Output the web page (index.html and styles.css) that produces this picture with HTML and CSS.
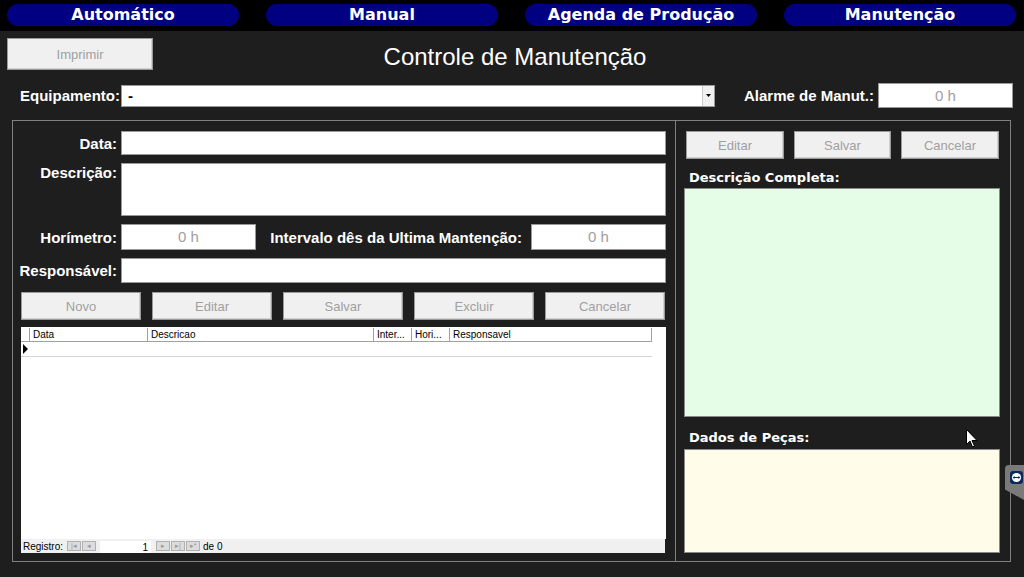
FILE: index.html
```html
<!DOCTYPE html>
<html lang="pt-BR">
<head>
    <meta charset="UTF-8">
    <meta name="viewport" content="width=device-width, initial-scale=1.0">
    <title>Controle de Manutenção</title>
    <link rel="stylesheet" href="styles.css">
</head>
<body>
    <nav class="topbar">
        <a class="tab">Automático</a>
        <a class="tab">Manual</a>
        <a class="tab">Agenda de Produção</a>
        <a class="tab">Manutenção</a>
    </nav>

    <header class="header">
        <button class="btn btn-print" disabled>Imprimir</button>
        <h1 class="title">Controle de Manutenção</h1>
    </header>

    <div class="equip-row">
        <label class="lbl">Equipamento:</label>
        <div class="select">
            <span class="select-value">-</span>
            <span class="select-arrow">
                <svg width="5" height="3" viewBox="0 0 5 3"><path d="M0 0h5L2.5 3z" fill="#000"/></svg>
            </span>
        </div>
        <label class="lbl alarm-lbl">Alarme de Manut.:</label>
        <div class="field field-hours alarm-field">0 h</div>
    </div>

    <main class="panel">
        <section class="left">
            <div class="form">
                <label class="lbl">Data:</label>
                <div class="field field-data"></div>

                <label class="lbl lbl-top">Descrição:</label>
                <div class="field field-desc"></div>

                <label class="lbl">Horímetro:</label>
                <div class="hours-row">
                    <div class="field field-hours">0 h</div>
                    <label class="lbl lbl-interval">Intervalo dês da Ultima Mantenção:</label>
                    <div class="field field-hours">0 h</div>
                </div>

                <label class="lbl">Responsável:</label>
                <div class="field field-resp"></div>
            </div>

            <div class="actions">
                <button class="btn" disabled>Novo</button>
                <button class="btn" disabled>Editar</button>
                <button class="btn" disabled>Salvar</button>
                <button class="btn" disabled>Excluir</button>
                <button class="btn" disabled>Cancelar</button>
            </div>

            <div class="grid">
                <div class="grid-head">
                    <div class="cell cell-sel"></div>
                    <div class="cell col-data">Data</div>
                    <div class="cell col-desc">Descricao</div>
                    <div class="cell col-short">Inter...</div>
                    <div class="cell col-short">Hori...</div>
                    <div class="cell col-resp">Responsavel</div>
                </div>
                <div class="grid-row">
                    <span class="row-marker"></span>
                </div>
            </div>

            <div class="recnav">
                <span class="recnav-label">Registro:</span>
                <span class="navbtn">|◂</span><span class="navbtn">◂</span>
                <span class="recnav-input">1</span>
                <span class="navbtn">▸</span><span class="navbtn">▸|</span><span class="navbtn">▸*</span>
                <span class="recnav-total">de 0</span>
            </div>
        </section>

        <section class="right">
            <div class="actions actions-right">
                <button class="btn btn-w98" disabled>Editar</button>
                <button class="btn btn-w97" disabled>Salvar</button>
                <button class="btn btn-w98" disabled>Cancelar</button>
            </div>
            <div class="memo-lbl">Descrição Completa:</div>
            <div class="memo memo-green"></div>
            <div class="memo-lbl memo-lbl-parts">Dados de Peças:</div>
            <div class="memo memo-yellow"></div>
        </section>
    </main>

    <!-- mouse pointer left in the capture -->
    <svg class="cursor" width="12" height="19" viewBox="0 0 12 19">
        <path d="M0.5 0.5v15l3.5-3.5 2.5 6 2-1-2.5-5.5h5z" fill="#fff" stroke="#000" stroke-width="1"/>
    </svg>

    <div class="side-tab">
        <svg width="13" height="13" viewBox="0 0 13 13">
            <rect x="0" y="0" width="13" height="13" rx="3" fill="#0b2a5b"/>
            <circle cx="6.5" cy="6.5" r="4.6" fill="#fff"/>
            <path d="M2.6 6.5l2-1.6v1h3.8v-1l2 1.6-2 1.6v-1H4.6v1z" fill="#0b2a5b"/>
        </svg>
    </div>
</body>
</html>
```

FILE: styles.css
```css
body {
    margin: 0;
    background-color: #1e1e1e;
    font-family: "Liberation Sans", Arial, sans-serif;
    color: #fff;
    width: 1024px;
    height: 577px;
    overflow: hidden;
}

.topbar {
    background-color: #000;
    display: grid;
    grid-template-columns: repeat(4, 232px);
    column-gap: 27px;
    padding: 4px 7px 5px;
}

.tab {
    height: 22px;
    line-height: 22px;
    border-radius: 11px;
    background-color: #000080;
    color: #fff;
    text-align: center;
    font-family: "DejaVu Sans", Verdana, sans-serif;
    font-weight: bold;
    font-size: 16px;
}

.header {
    display: grid;
    grid-template-columns: 146px 1fr 146px;
    padding: 0 7px;
    margin-top: 7px;
    height: 32px;
}

.title {
    margin: 0;
    padding: 3px 0 0 6px;
    text-align: center;
    font-size: 24px;
    font-weight: normal;
    line-height: 32px;
}

.btn {
    background-color: #f0f0f0;
    border: 1px solid #9a9a9a;
    box-shadow: inset -1px -1px 0 #d0d0d0;
    color: #a0a0a0;
    font-family: "Liberation Sans", Arial, sans-serif;
    font-size: 13px;
    padding: 0;
    height: 28px;
}

.btn-print {
    height: 32px;
}

.lbl {
    font-weight: bold;
    font-size: 15px;
    color: #fff;
    text-align: right;
    white-space: nowrap;
}

.equip-row {
    display: flex;
    align-items: center;
    margin-top: 13px;
    height: 25px;
    padding-left: 20px;
}

.equip-row .lbl {
    width: 98px;
    margin-right: 3px;
}

.select {
    width: 594px;
    height: 22px;
    box-sizing: border-box;
    background-color: #fff;
    border: 1px solid #999;
    display: flex;
    color: #000;
}

.select-value {
    flex: 1;
    padding-left: 6px;
    font-weight: bold;
    font-size: 15px;
    line-height: 20px;
}

.select-arrow {
    width: 11px;
    background-color: #f0f0f0;
    border-left: 1px solid #c8c8c8;
    display: flex;
    align-items: center;
    justify-content: center;
}

.equip-row .alarm-lbl {
    width: auto;
    margin: 0 4px 0 29px;
}

.field {
    background-color: #fff;
    border: 1px solid #999;
    box-sizing: border-box;
}

.field-hours {
    width: 135px;
    height: 25px;
    text-align: center;
    color: #a0a0a0;
    font-size: 15px;
    line-height: 23px;
}

.panel {
    margin: 12px 13px 0 12px;
    height: 442px;
    box-sizing: border-box;
    border: 1px solid #808080;
    display: grid;
    grid-template-columns: 663px 1fr;
}

.left {
    border-right: 1px solid #808080;
    display: flex;
    flex-direction: column;
    padding: 10px 9px 8px 0;
}

.form {
    display: grid;
    grid-template-columns: 104px 1fr;
    column-gap: 4px;
    row-gap: 8px;
    align-items: center;
}

.lbl-top {
    align-self: start;
    padding-top: 1px;
}

.field-data {
    height: 24px;
}

.field-desc {
    height: 53px;
}

.field-resp {
    height: 25px;
}

.hours-row {
    display: flex;
    align-items: center;
    gap: 9px;
}

.hours-row .field-hours {
    height: 26px;
    line-height: 24px;
}

.lbl-interval {
    flex: 1;
}

.actions {
    display: flex;
    gap: 11px;
    margin: 9px 0 0 8px;
}

.actions .btn {
    width: 120px;
}

.grid {
    flex: 1;
    margin: 7px 0 0 8px;
    background-color: #fff;
    color: #000;
    font-size: 10px;
}

.grid-head {
    display: flex;
    margin-top: 1px;
    height: 14px;
    width: 631px;
    box-sizing: border-box;
    border-bottom: 1px solid #a0a0a0;
}

.cell {
    border-right: 1px solid #a0a0a0;
    box-sizing: border-box;
    padding-left: 3px;
    line-height: 13px;
    white-space: nowrap;
    overflow: hidden;
}

.cell-sel {
    width: 8px;
    padding: 0;
    border-right: none;
}

.col-data {
    width: 119px;
    border-left: 1px solid #a0a0a0;
}

.col-desc {
    width: 226px;
}

.col-short {
    width: 38px;
}

.col-resp {
    width: 202px;
}

.grid-row {
    height: 15px;
    width: 631px;
    box-sizing: border-box;
    border-bottom: 1px solid #d4d4d4;
    display: flex;
    align-items: center;
}

.row-marker {
    margin-left: 2px;
    width: 0;
    height: 0;
    border-top: 5px solid transparent;
    border-bottom: 5px solid transparent;
    border-left: 5px solid #000;
}

.recnav {
    height: 14px;
    margin-left: 8px;
    margin-right: 1px;
    background-color: #f0f0f0;
    color: #000;
    font-size: 10px;
    display: flex;
    align-items: center;
    padding-left: 2px;
}

.recnav-label {
    margin-right: 4px;
}

.navbtn {
    width: 14px;
    height: 10px;
    box-sizing: border-box;
    border: 1px solid #b0b0b0;
    background-color: #dcdcdc;
    color: #9a9a9a;
    font-size: 7px;
    line-height: 8px;
    text-align: center;
    margin-right: 1px;
}

.recnav-input {
    width: 51px;
    height: 12px;
    background-color: #fff;
    text-align: right;
    line-height: 13px;
    padding-right: 3px;
    box-sizing: border-box;
    margin: 1px 5px 0 3px;
}

.recnav-total {
    margin-left: 2px;
}

.right {
    padding: 10px 9px 8px 8px;
    display: flex;
    flex-direction: column;
}

.actions-right {
    gap: 10px;
    margin: 0 0 0 2px;
}

.actions-right .btn-w98 {
    width: 98px;
}

.actions-right .btn-w97 {
    width: 97px;
}

.memo-lbl {
    font-family: "DejaVu Sans", Verdana, sans-serif;
    font-weight: bold;
    font-size: 13px;
    line-height: 16px;
    margin: 11px 0 2px 5px;
}

.memo-lbl-parts {
    margin-top: 13px;
    margin-bottom: 3px;
}

.memo {
    border: 1px solid #8a8a8a;
    width: 316px;
    box-sizing: border-box;
}

.memo-green {
    height: 229px;
    background-color: #e5fce6;
}

.memo-yellow {
    flex: 1;
    background-color: #fffde9;
}

.cursor {
    position: absolute;
    left: 966px;
    top: 429px;
}

.side-tab {
    position: absolute;
    right: 0;
    top: 465px;
    width: 19px;
    height: 35px;
    background-color: #7a7a7a;
    border-radius: 4px 0 0 0;
    clip-path: polygon(0 0, 100% 0, 100% 100%, 0 70%);
    padding: 5px 0 0 5px;
    box-sizing: border-box;
}
```
